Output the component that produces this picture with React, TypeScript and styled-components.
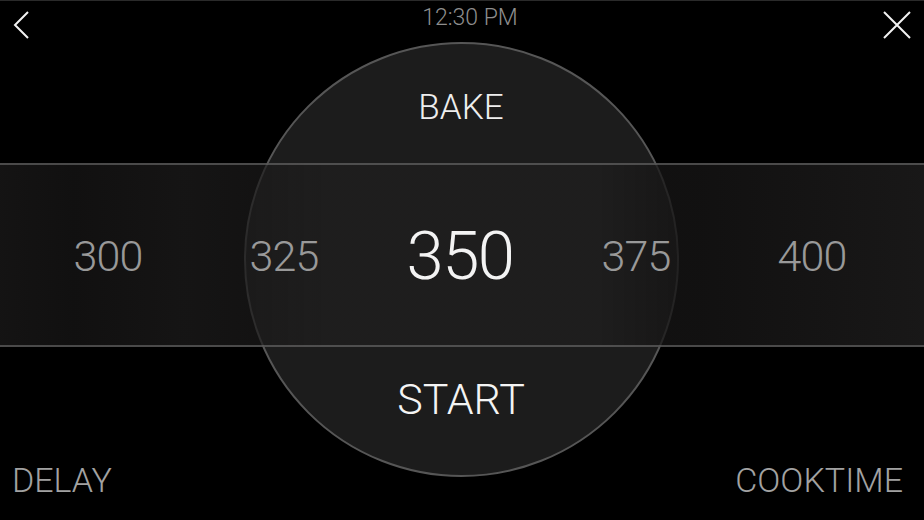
import React from "react";
import styled, { createGlobalStyle } from "styled-components";

const Global = createGlobalStyle`
  html, body { margin: 0; padding: 0; background: #000; }
  body { font-family: Roboto, "Liberation Sans", sans-serif; }
`;

const Screen = styled.div`
  width: 924px;
  height: 520px;
  background: #000;
  display: grid;
  grid-template: 1fr / 1fr;
  overflow: hidden;
  box-shadow: inset 0 1px 0 #2a2a2a;
  font-family: Roboto, "Liberation Sans", sans-serif;
  font-weight: 300;
`;

const Layer = styled.div<{ $align: "start" | "center" | "end" }>`
  grid-area: 1 / 1;
  align-self: ${(p) => p.$align};
`;

const Header = styled(Layer)`
  display: flex;
  justify-content: space-between;
  align-items: flex-start;
  padding: 11px 13px 0 13px;
  z-index: 3;
`;

const IconButton = styled.button`
  background: none;
  border: none;
  padding: 0;
  height: 28px;
  display: flex;
  align-items: center;
  justify-content: center;
  color: #f2f2f2;
`;

const Clock = styled.div`
  font-size: 23px;
  color: #8e8e8e;
  line-height: 24px;
  margin-top: -5px;
  margin-left: 26px;
`;

const Stage = styled(Layer)`
  display: grid;
  grid-template: 1fr / 1fr;
  place-items: center;
  justify-self: stretch;
`;

const Dial = styled.div`
  grid-area: 1 / 1;
  width: 431px;
  height: 431px;
  border-radius: 50%;
  border: 2px solid #565656;
  background: #1c1c1c;
  margin-top: -2px;
  margin-left: -2px;
  display: grid;
  grid-template-rows: 119px 186px 1fr;
  justify-items: center;
  z-index: 1;
`;

const Mode = styled.div`
  align-self: center;
  font-size: 35px;
  color: #eeeeee;
  margin-top: 8px;
`;

const StartButton = styled.button`
  grid-row: 3;
  align-self: start;
  margin-top: 28px;
  background: none;
  border: none;
  padding: 0;
  font-family: inherit;
  font-weight: 300;
  font-size: 43px;
  line-height: 45px;
  color: #f4f4f4;
`;

const Band = styled.div`
  grid-area: 1 / 1;
  justify-self: stretch;
  height: 180px;
  margin-top: -10px;
  border-top: 2px solid rgba(120, 120, 120, 0.55);
  border-bottom: 2px solid rgba(120, 120, 120, 0.55);
  background: linear-gradient(
    90deg,
    rgba(24, 23, 23, 0.85) 0%,
    rgba(20, 19, 19, 0.85) 8%,
    rgba(25, 24, 24, 0.85) 20%,
    rgba(31, 30, 30, 0.55) 35%,
    rgba(31, 30, 30, 0.55) 65%,
    rgba(20, 19, 19, 0.88) 76%,
    rgba(28, 27, 27, 0.88) 100%
  );
  display: grid;
  grid-template-columns: repeat(5, 176px);
  justify-content: center;
  align-items: center;
  z-index: 2;
  padding-right: 4px;
`;

const Temp = styled.div<{ $active?: boolean }>`
  text-align: center;
  font-size: ${(p) => (p.$active ? "67px" : "43px")};
  color: ${(p) => (p.$active ? "#f3f3f3" : "#999999")};
  letter-spacing: ${(p) => (p.$active ? "-1.5px" : "-0.8px")};
  margin-top: 2px;
`;

const Footer = styled(Layer)`
  display: flex;
  justify-content: space-between;
  padding: 0 21px 22px 12px;
  z-index: 3;
`;

const FooterAction = styled.button`
  background: none;
  border: none;
  padding: 0;
  font-family: inherit;
  font-weight: 300;
  font-size: 34px;
  line-height: 35px;
  color: #a2a2a2;
`;

const temps = [300, 325, 350, 375, 400];

export default function App() {
  return (
    <>
      <Global />
      <Screen>
        <Header $align="start">
          <IconButton aria-label="Back">
            <svg width="18" height="28" viewBox="0 0 18 28">
              <path d="M15 1 L2 14 L15 27" fill="none" stroke="currentColor" strokeWidth="2" />
            </svg>
          </IconButton>
          <Clock>12:30 PM</Clock>
          <IconButton aria-label="Close">
            <svg width="28" height="28" viewBox="0 0 28 28">
              <path d="M1 1 L27 27 M27 1 L1 27" fill="none" stroke="currentColor" strokeWidth="2" />
            </svg>
          </IconButton>
        </Header>
        <Stage $align="center">
          <Dial>
            <Mode>BAKE</Mode>
            <StartButton>START</StartButton>
          </Dial>
          <Band>
            {temps.map((t) => (
              <Temp key={t} $active={t === 350}>
                {t}
              </Temp>
            ))}
          </Band>
        </Stage>
        <Footer $align="end">
          <FooterAction>DELAY</FooterAction>
          <FooterAction>COOKTIME</FooterAction>
        </Footer>
      </Screen>
    </>
  );
}
